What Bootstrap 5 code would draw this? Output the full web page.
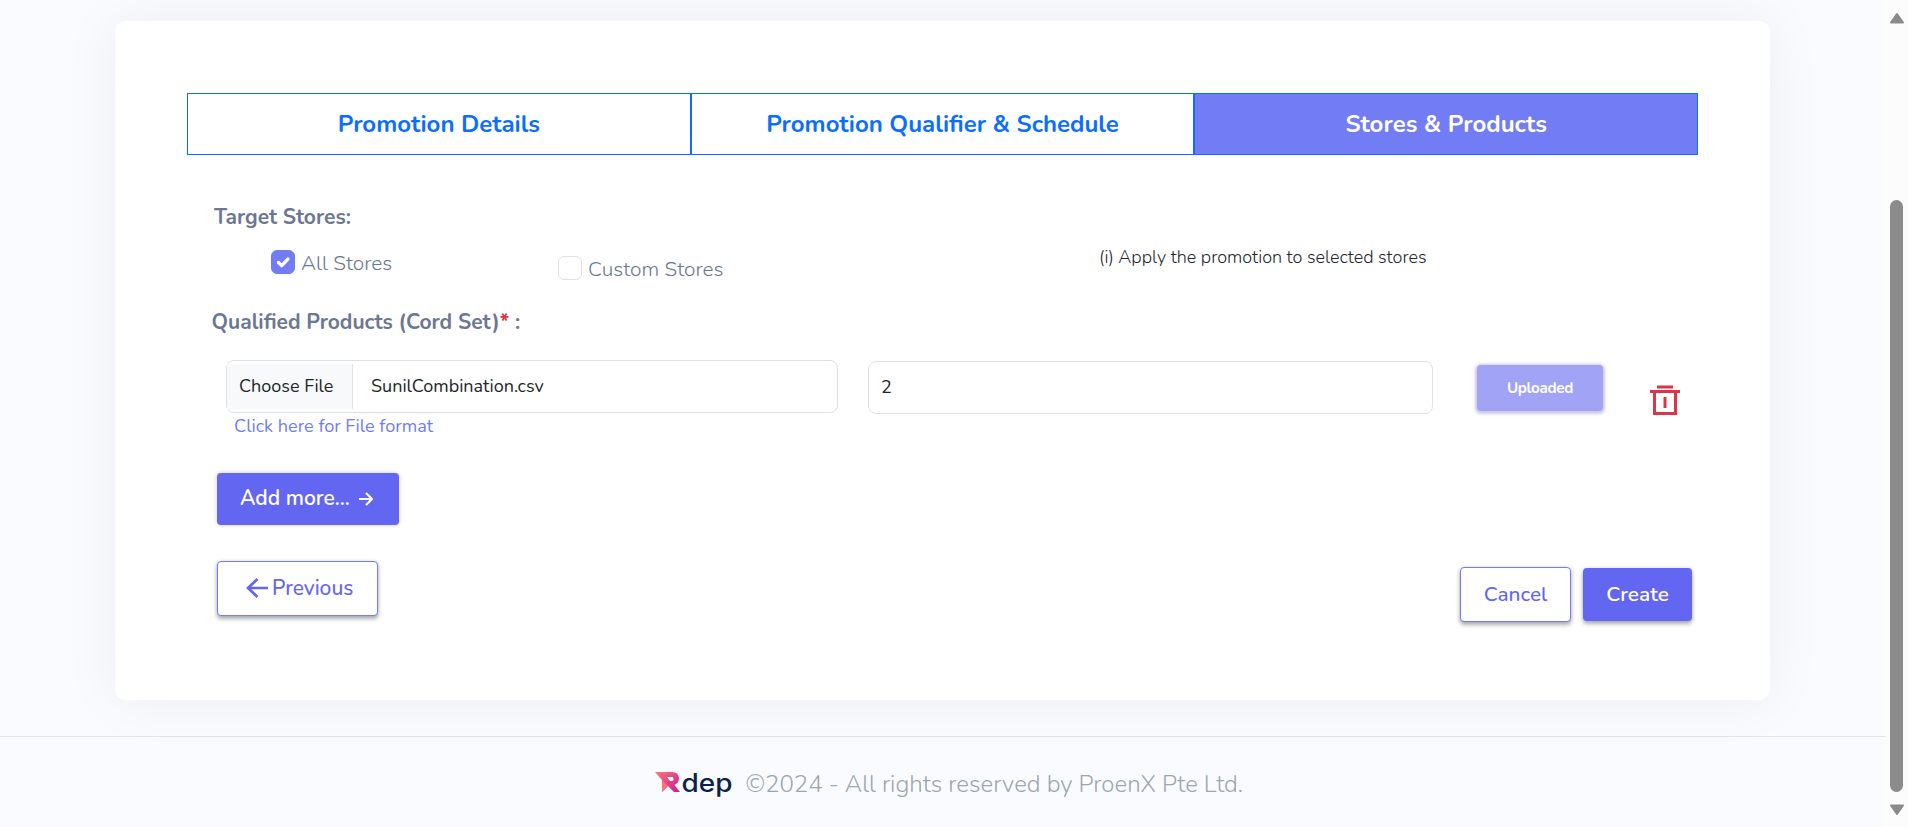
<!DOCTYPE html>
<html lang="en">
<head>
<meta charset="utf-8">
<meta name="viewport" content="width=device-width, initial-scale=1">
<title>Promotion - Stores &amp; Products</title>
<link href="https://cdn.jsdelivr.net/npm/bootstrap@5.3.0/dist/css/bootstrap.min.css" rel="stylesheet">
<style>
body{font-family:Nunito,Lato,"Open Sans",sans-serif;background:#fafbff;height:827px;overflow:hidden;color:#212529}
.page{height:827px}
.promo-card{margin:21px 115px 0;height:679px;padding:72px;border:0;border-radius:10px;background:#fff;box-shadow:0 0 58px rgba(0,0,0,.06)}
.steps .btn{--bs-btn-border-radius:0;height:62px;padding:0 0 1px;font-size:24px;font-weight:700;border:1px solid #0d6efd;color:#0d6efd;background:#fff}
.steps .btn.active{background:#717cf5;color:#fff;border-color:#0d6efd}
.lbl{color:#6b7793;font-size:21px;font-weight:700;line-height:30px}
.stores-row{height:56px;padding-top:19px}
.check{gap:6px;line-height:26px;font-size:20.9px;font-weight:300;color:#6b7793}
.check .form-check-input{width:24px;height:24px;margin:0;border-radius:6px;border:1px solid #dee2e6}
.check .form-check-input:checked{background-color:#717cf5;border-color:#717cf5;background-size:18px;background-image:url("data:image/svg+xml,%3csvg xmlns='http://www.w3.org/2000/svg' viewBox='0 0 16 16'%3e%3cpath fill='none' stroke='%23fff' stroke-width='3' stroke-linecap='round' stroke-linejoin='round' d='M4 8.4l2.8 2.8L12.4 5.4'/%3e%3c/svg%3e")}
.info{font-size:18px;font-weight:300;line-height:24px;margin-top:-5px}
.field{height:53px;border:1px solid #dee2e6;border-radius:8px;font-size:18px;line-height:24px;background:#fff;padding-bottom:1px}
.pick{height:45px;width:126px;padding:0 0 2px 12px;background:#f8f9fb;border-right:1px solid #dee2e6;margin-top:1px}
.fmt{font-size:18.1px;line-height:24px;color:#717cf5;text-decoration:none;margin:1px 0 0 8px}
.act{--bs-btn-border-radius:4px;font-size:20.8px;font-weight:500;padding:0;border:0;display:flex;align-items:center;box-shadow:0 3px 4px rgba(0,0,0,.3),0 0 4px rgba(0,0,0,.12)}
.act.fill{background:#6366f1;color:#fff;font-weight:600}
.act.line{background:#fff;color:#6366f1;border:1px solid #717cf5}
.act.soft{background:#a1a3f7;color:#fff;font-weight:700;font-size:15.2px;letter-spacing:-.3px;width:126px;height:46px;margin:5px 0 0 44px;box-shadow:0 1px 3px 2px rgba(99,90,160,.33)}
.act.more{width:182px;height:52px;margin:35px 0 0 30px;padding:0 0 0 23px;gap:9px;font-size:21px;box-shadow:0 0 4px rgba(0,0,0,.22)}
.act.prev{width:161px;height:55px;padding-left:28px;gap:4px;font-size:21px}
.act.cancel{width:111px;height:55px;margin:6px 12px 0 auto}
.act.create{width:109px;height:53px;margin:7px 6px 0 0}
.foot{border-top:1px solid #e2e5ea;height:91px;margin-top:36px;padding:30px 0 0 655px;font-size:24px;font-weight:300;color:#9ca6ae}
.track{width:23px;background:#fcfcfc;padding-top:12px}
.thumb{width:13px;height:592px;border-radius:7px;background:#8b8b8b;margin:176px 0 12px}
</style>
</head>
<body class="d-flex">
<div class="page flex-grow-1">
  <main class="card promo-card">
    <div class="steps d-flex">
      <a class="btn w-100 d-flex align-items-center justify-content-center">Promotion Details</a>
      <a class="btn w-100 d-flex align-items-center justify-content-center">Promotion Qualifier &amp; Schedule</a>
      <a class="btn active w-100 d-flex align-items-center justify-content-center">Stores &amp; Products</a>
    </div>
    <div class="lbl" style="margin:47px 0 -1px 27px">Target Stores:</div>
    <div class="stores-row d-flex align-items-start">
      <label class="check d-flex" style="margin-left:84px;width:287px"><input class="form-check-input" type="checkbox" checked>All Stores</label>
      <label class="check d-flex" style="margin-top:6px;width:541px"><input class="form-check-input" type="checkbox">Custom Stores</label>
      <span class="info">(i) Apply the promotion to selected stores</span>
    </div>
    <div class="lbl" style="margin:20px 0 -1px 24.500px">Qualified Products (Cord Set)<span class="text-danger">*</span> :</div>
    <div class="d-flex align-items-start" style="margin:24px 0 0 39px">
      <div style="width:612px">
        <div class="field d-flex align-items-center"><span class="pick d-flex align-items-center">Choose File</span><span style="margin-left:18px">SunilCombination.csv</span></div>
        <a class="fmt d-block">Click here for File format</a>
      </div>
      <div class="field d-flex align-items-center" style="width:565px;margin:1px 0 0 30px;padding-left:12px">2</div>
      <button class="btn act soft justify-content-center">Uploaded</button>
      <svg width="30" height="30" viewBox="0 0 30 30" style="margin:25px 0 0 47px" fill="none" stroke="#dc3545" stroke-width="3"><path d="M7 2h16M0 6.500h30M4.500 7v21.500h21V7M15 12v11"/></svg>
    </div>
    <button class="btn act fill more">Add more...<svg width="14" height="14" viewBox="0 0 14 14" fill="none" stroke="#fff" stroke-width="2"><path d="M0 7h12.500M7 1l6 6-6 6"/></svg></button>
    <div class="d-flex align-items-start" style="margin:36px 0 0 30px">
      <button class="btn act line prev"><svg width="22" height="20" viewBox="0 0 22 20" style="margin-top:-2px" fill="none" stroke="#6366f1" stroke-width="2.700"><path d="M22 10H2M11.500 1l-9.500 9 9.500 9"/></svg>Previous</button>
      <button class="btn act line cancel justify-content-center">Cancel</button>
      <button class="btn act fill create justify-content-center">Create</button>
    </div>
  </main>
  <footer class="foot d-flex align-items-start">
    <svg width="80" height="34" viewBox="0 0 80 34" style="margin:1px 10.500px 0 0">
      <defs><linearGradient id="rg" x1="0" y1="0" x2="1" y2="1"><stop offset="0" stop-color="#ff7a70"/><stop offset=".55" stop-color="#e2408a"/><stop offset="1" stop-color="#c91f96"/></linearGradient></defs>
      <path d="M0 4h17c5 0 7 3 7 6.500 0 3-2 5.500-4.500 6.500L25 24h-6l-6-6-6 6V12Z" fill="url(#rg)"/>
      <path d="M12 9h5c2 0 2 4 0 4h-2Z" fill="#fff"/>
      <path d="M7 12l6 6-6 6Z" fill="#ff6f78"/>
      <text x="26.500" y="24" font-family="Inter" font-weight="500" font-size="25" textLength="51" lengthAdjust="spacingAndGlyphs" fill="#0b2148">dep</text>
    </svg>
    <span style="margin-top:-1px">©2024 - All rights reserved by ProenX Pte Ltd.</span>
  </footer>
</div>
<div class="track d-flex flex-column align-items-center">
  <svg width="16" height="12" viewBox="0 0 16 12"><path d="M8 2L14 10.500H2Z" fill="#8b8b8b" stroke="#8b8b8b" stroke-width="2" stroke-linejoin="round"/></svg>
  <div class="thumb"></div>
  <svg width="16" height="12" viewBox="0 0 16 12"><path d="M2 1.500h12L8 10Z" fill="#8b8b8b" stroke="#8b8b8b" stroke-width="2" stroke-linejoin="round"/></svg>
</div>
<script src="https://cdn.jsdelivr.net/npm/bootstrap@5.3.0/dist/js/bootstrap.bundle.min.js"></script>
</body>
</html>
